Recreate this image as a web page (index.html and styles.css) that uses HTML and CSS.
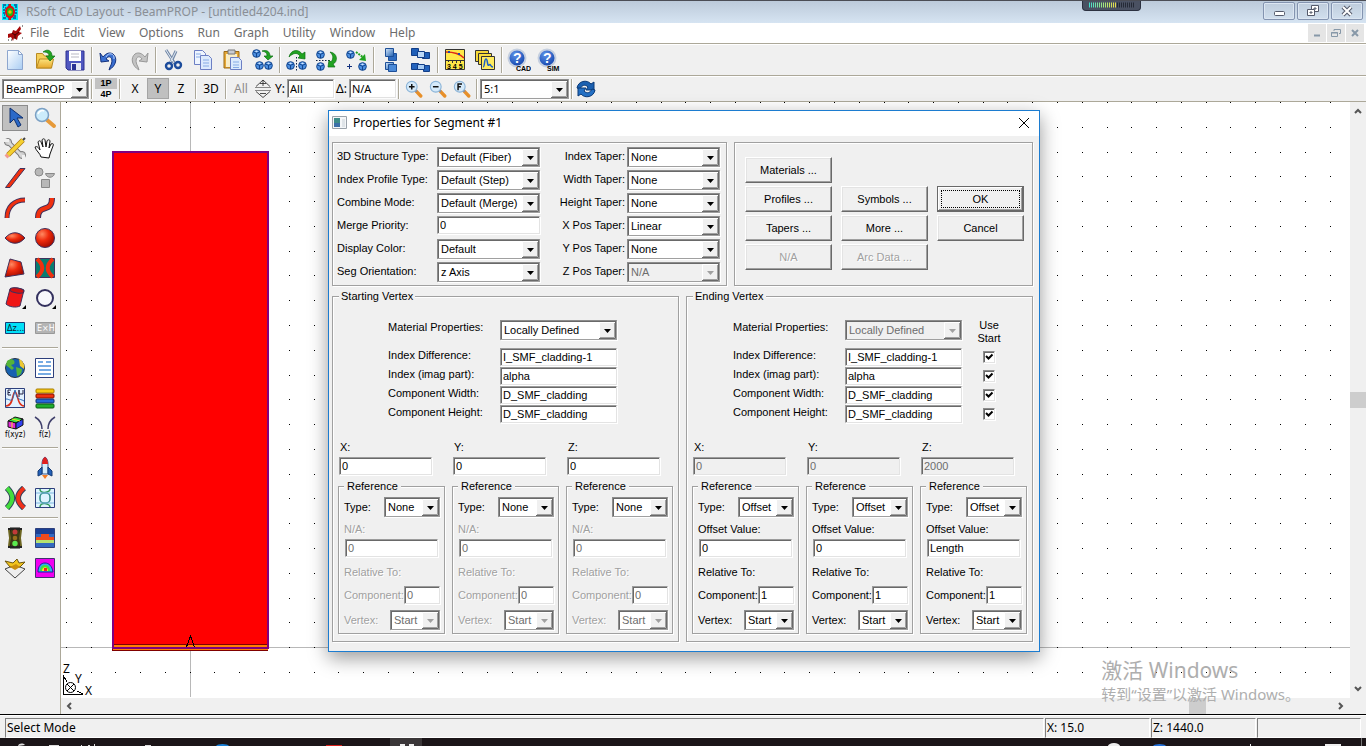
FILE: index.html
```html
<!DOCTYPE html>
<html lang="en">
<head>
<meta charset="utf-8">
<title>RSoft CAD Layout - BeamPROP</title>
<link rel="stylesheet" href="styles.css">
</head>
<body>
<svg class="defs" width="0" height="0" aria-hidden="true">
  <defs>
    <linearGradient id="gPage" x1="0" y1="0" x2="1" y2="1"><stop offset="0" stop-color="#fff"/><stop offset="1" stop-color="#a9cdf3"/></linearGradient>
    <linearGradient id="gFold" x1="0" y1="0" x2="0" y2="1"><stop offset="0" stop-color="#fbe27c"/><stop offset="1" stop-color="#e8a92c"/></linearGradient>
    <linearGradient id="gBlue" x1="0" y1="0" x2="1" y2="1"><stop offset="0" stop-color="#d7e9fb"/><stop offset="1" stop-color="#1f5fb0"/></linearGradient>
    <radialGradient id="gBall" cx=".35" cy=".3" r=".7"><stop offset="0" stop-color="#ff8a62"/><stop offset=".5" stop-color="#ee2a0c"/><stop offset="1" stop-color="#a80d00"/></radialGradient>
    <radialGradient id="gHelp" cx=".4" cy=".3" r=".8"><stop offset="0" stop-color="#5d93e8"/><stop offset="1" stop-color="#0a3aa5"/></radialGradient>
    <linearGradient id="gMeter" gradientUnits="userSpaceOnUse" x1="0" y1="0" x2="28" y2="0"><stop offset="0" stop-color="#3fe0d0"/><stop offset=".5" stop-color="#a0e880"/><stop offset="1" stop-color="#f4dc40"/></linearGradient>
    <symbol id="cube" viewBox="0 0 10 10"><circle cx="5" cy="5" r="4.3" fill="#4c8fe0" stroke="#0b3c84"/><path d="M1.4 3.2 5 4.8l3.6-1.600M5 4.800V9" fill="none" stroke="#0b3c84"/><path d="M3 2.600 5 1.700l2 .9-2 .9z" fill="#cfe5ff"/></symbol>
    <symbol id="lens" viewBox="0 0 16 16"><path d="m9.500 9.500 4.500 4.700" stroke="#e8902a" stroke-width="3" stroke-linecap="round"/><path d="m9 9 1.500 1.500" stroke="#8d8d99" stroke-width="2"/><circle cx="6" cy="6" r="4.800" fill="#d5eafa" stroke="#8bb4d8"/></symbol>
  </defs>
</svg>

<header class="titlebar">
  <svg class="app-icon" viewBox="0 0 16 16"><path fill="#00f0f8" d="M0 0h16v16H0z"/><path d="M1 1h3M6 1h1M12 1h3M1 3h1M3 4h1M13 3h2M1 6h2M13 6h2M1 9h2M13 9h2M2 11h1M12 12h2M1 14h3M6 15h1M11 14h3M4 12h1" stroke="#124a94" stroke-width="1.500"/><ellipse cx="8" cy="8" rx="5" ry="6.500" fill="#e01010"/><path d="M8 0v16" stroke="#e01010" stroke-width="2"/><ellipse cx="8" cy="8" rx="3" ry="4" fill="#15c515"/><circle cx="8" cy="8" r="1.700" fill="#f0c000"/></svg>
  <h1 class="title">RSoft CAD Layout - BeamPROP - [untitled4204.ind]</h1>
  <div class="meter" aria-hidden="true"><svg width="46" height="6"><path d="M28 3h18" stroke="#252a36" stroke-width="5" stroke-dasharray="1 1"/><path d="M0 3h28v.01" fill="none" stroke="url(#gMeter)" stroke-width="5" stroke-dasharray="1 1"/></svg></div>
  <div class="win-buttons">
    <button aria-label="Minimize"><svg width="14" height="12"><rect x="2.500" y="6.500" width="10" height="4" rx="1" fill="#fff" stroke="#555a6b"/></svg></button>
    <button aria-label="Restore"><svg width="14" height="12"><path d="M5.500.500h7v6h-7z" fill="#fff" stroke="#555a6b"/><path d="M1.500 4.500h7v6h-7z" fill="#fff" stroke="#555a6b"/><path d="M4 7h2v1H4zM8 3h2v1H8z" fill="#fff" stroke="#555a6b"/></svg></button>
    <button aria-label="Close"><svg width="14" height="12"><path d="m3 2 8 8m0-8-8 8" stroke="#555a6b" stroke-width="4"/><path d="m3 2 8 8m0-8-8 8" stroke="#fff" stroke-width="2"/></svg></button>
  </div>
</header>

<nav class="menubar">
  <svg class="doc-icon" viewBox="0 0 16 16"><path d="M1 9 5 8l1-3 3 1 4-5 1 3-2 3 3 1-4 3-1 4-3-2-1 3-2-4-3 1z" fill="#a80808"/><path d="m5 8 3 2 4-3M8 10v4" stroke="#400" fill="none"/><path d="M1 15h1M4 15h1M15 1h1M15 13h1" stroke="#222"/></svg>
  <button>File</button><button>Edit</button><button>View</button><button>Options</button><button>Run</button><button>Graph</button><button>Utility</button><button>Window</button><button>Help</button>
  <div class="mdi-buttons">
    <button aria-label="Minimize document"><svg width="10" height="10"><path d="M2 7.500h6" stroke="#8798a8" stroke-width="2"/></svg></button>
    <button aria-label="Restore document"><svg width="10" height="10" fill="none" stroke="#8798a8"><path d="M3 3V1.500h6.500v4H8M.500 4.500h6v4h-6zM0 5h7"/></svg></button>
    <button aria-label="Close document"><svg width="10" height="10"><path d="m2 2 6 6m0-6L2 8" stroke="#8798a8" stroke-width="2"/></svg></button>
  </div>
</nav>

<div class="toolbar tools">
  <button aria-label="New"><svg viewBox="0 0 24 24"><path d="M4.500 2.500h11l4 4v15h-15z" fill="url(#gPage)" stroke="#8da6cf"/><path d="M15.500 2.500v4h4z" fill="#fff" stroke="#8da6cf"/></svg></button>
  <button aria-label="Open"><svg viewBox="0 0 24 24"><path d="M3.500 20V5.500h6l2 2.500h7v12z" fill="#f5cf5a" stroke="#b98a22"/><path d="m3.500 20 3-9h14l-2 9z" fill="url(#gFold)" stroke="#b98a22"/><path d="M10 4c5-4 9-1 9 4h3l-5 5-4-5h3c0-3-2-4-6-4z" fill="#22a322" stroke="#0b6e12" stroke-width=".7"/></svg></button>
  <button aria-label="Save"><svg viewBox="0 0 24 24"><path d="M3 3h18v19H5l-2-2z" fill="#4f57c0" stroke="#2e3190"/><path d="M6 3h12v10H6z" fill="#fff"/><path d="M8 6h8M8 9h8" stroke="#b9b9c4"/><path d="M8 15h10v7H8z" fill="#e6e8f4"/><path d="M9 16h4v6H9z" fill="#2a3194"/></svg></button>
  <span class="sep"></span>
  <button aria-label="Undo"><svg viewBox="0 0 24 24"><path d="m3 5 1 9 8-1-3-2c3-5 9-1 4 8l-1 3c7-4 9-12 4-16-3-2-7-1-10 3z" fill="#3a6fd0" stroke="#14327e"/><path d="M9 9c2-5 9-4 8 2" fill="none" stroke="#bcd6ff"/></svg></button>
  <button aria-label="Redo"><svg viewBox="0 0 24 24"><path d="m21 5-1 9-8-1 3-2c-3-5-9-1-4 8l1 3C5 18 3 10 8 6c3-2 7-1 10 3z" fill="#c4c4c4" stroke="#999"/></svg></button>
  <span class="sep"></span>
  <button aria-label="Cut"><svg viewBox="0 0 24 24"><path d="m5 2 9 14M15 3 9 16" stroke="#7389a8" stroke-width="3"/><path d="m5 2 8 13M15 3 9 15" stroke="#e4ecf5"/><circle cx="8" cy="18" r="3" fill="none" stroke="#1c4c9c" stroke-width="2.400"/><circle cx="17" cy="17" r="3" fill="none" stroke="#1c4c9c" stroke-width="2.400"/></svg></button>
  <button aria-label="Copy"><svg viewBox="0 0 24 24" stroke="#6c7fc4"><path d="M3.500 2.500h8l3 3v11h-11z" fill="#eef5ff"/><path d="M9.500 7.500h8l3 3v11h-11z" fill="#dceafd"/><path d="M5 6h5M5 9h4M12 12h6M12 15h6M12 18h6" stroke="#86abe5"/></svg></button>
  <button aria-label="Paste"><svg viewBox="0 0 24 24"><path d="M3 3.500h15V20H3z" fill="#e6a836" stroke="#9a6a18"/><path d="M5 6h11v13H5z" fill="#f8edc8"/><path d="M7 2h7v4H7z" fill="#c9ccd4" stroke="#777"/><path d="M9.500 9.500h8l3 3v9h-11z" fill="#dceafd" stroke="#6c7fc4"/><path d="M12 14h6M12 17h6M12 19.500h6" stroke="#86abe5"/></svg></button>
  <button aria-label="Duplicate"><svg viewBox="0 0 24 24"><use href="#cube" x="1" y="1" width="9" height="9"/><use href="#cube" x="4" y="13" width="9" height="9"/><use href="#cube" x="13" y="13" width="9" height="9"/><path d="M11 3c6-2 8 2 8 5h3l-5 4-4-4h3c0-3-1-4-5-5z" fill="#21a321" stroke="#0b6e12" stroke-width=".7"/></svg></button>
  <span class="sep"></span>
  <button aria-label="Flip horizontally"><svg viewBox="0 0 24 24"><use href="#cube" x="1" y="13" width="9" height="9"/><use href="#cube" x="13" y="13" width="9" height="9"/><path d="M11.500 9v14" stroke="#124" stroke-dasharray="1.500 1.500"/><path d="M4 9c2-8 10-8 13-3l3-2v7l-7-1 2-2c-3-4-7-3-11 1z" fill="#21a321" stroke="#0b6e12" stroke-width=".7"/></svg></button>
  <button aria-label="Flip vertically"><svg viewBox="0 0 24 24"><use href="#cube" x="1" y="2" width="9" height="9"/><use href="#cube" x="1" y="14" width="9" height="9"/><path d="M1 12.500h14" stroke="#124" stroke-dasharray="1.500 1.500"/><path d="M15 4c8 1 8 10 3 12l2 3h-7l1-7 2 2c3-4 2-7-1-10z" fill="#21a321" stroke="#0b6e12" stroke-width=".7"/></svg></button>
  <button aria-label="Move copy"><svg viewBox="0 0 24 24"><use href="#cube" x="1" y="2" width="9" height="9"/><use href="#cube" x="13" y="14" width="9" height="9"/><path d="m11 4 8 6" stroke="#21a321" stroke-width="2" stroke-dasharray="2 1"/><path d="m20 6 1 7-7-1z" fill="#21a321"/><path d="M2 18.500h5M4.500 16v5" stroke="#12307e"/></svg></button>
  <span class="sep"></span>
  <button aria-label="Bring forward"><svg viewBox="0 0 24 24" stroke="#1d4f98"><path d="M9.500 5.500h8v7h-8z" fill="#2f6cc0"/><path d="M6.500.500h8v8h-8z" fill="url(#gBlue)"/><path d="M6.500 14.500h8v7h-8z" fill="url(#gBlue)"/><path d="M9.500 16.500h8v7h-8z" fill="#4b8ad8"/></svg></button>
  <button aria-label="Arrange"><svg viewBox="0 0 24 24" stroke="#123e88"><path d="M2.500.500h7v7h-7zM13.500 4.500h7v6h-7z" fill="#1f5fb8"/><path d="M8.500 3.500h7v6h-7z" fill="#bcd9f8"/><path d="M2.500 15.500h7v6h-7zM14.500 17.500h6v6h-6z" fill="#2463bc"/><path d="M8.500 16.500h7v5h-7z" fill="#a9cdf4"/></svg></button>
  <span class="sep"></span>
  <button aria-label="Measure"><svg viewBox="0 0 24 24"><path d="M2.500 1.500h19v20h-19z" fill="#ffe848" stroke="#333"/><path d="M2 12.500h20M5.500 12v2M9.500 12v3M13.500 12v3M17.500 12v3" stroke="#333"/><path d="M3 4c7 0 13 1 18 6" stroke="#e02818" stroke-width="1.500" fill="none"/><path d="M5 3h2v2H5zM15 5h2v2h-2z" fill="#24a"/><text x="4" y="21" class="micro">3 4 5</text></svg></button>
  <button aria-label="Graphs"><svg viewBox="0 0 24 24" stroke="#333"><path d="M2.500 2.500h13v11h-13z" fill="#f5d838"/><path d="M5.500 5.500h13v11h-13z" fill="#f8de40"/><path d="M8.500 8.500h13v13h-13z" fill="#ffec60"/><path d="M10 19c2 0 1-8 3-8s1 8 3 6 1 2 4 2" fill="none" stroke="#1b62c8" stroke-width="1.500"/></svg></button>
  <span class="sep"></span>
  <button aria-label="CAD help"><svg viewBox="0 0 24 24"><circle cx="10" cy="10" r="8.500" fill="url(#gHelp)" stroke="#c5cfdf" stroke-width="2"/><text x="6" y="15" class="help-mark">?</text><text x="9" y="23" class="tiny">CAD</text></svg></button>
  <button aria-label="Simulation help"><svg viewBox="0 0 24 24"><circle cx="10" cy="10" r="8.500" fill="url(#gHelp)" stroke="#c5cfdf" stroke-width="2"/><text x="6" y="15" class="help-mark">?</text><text x="10" y="23" class="tiny">SIM</text></svg></button>
</div>

<div class="toolbar options">
  <select class="combo program" aria-label="Program"><option>BeamPROP</option></select>
  <span class="sep"></span>
  <div class="pages"><button class="on">1P</button><button>4P</button></div>
  <span class="sep"></span>
  <button class="flat">X</button><button class="flat on">Y</button><button class="flat">Z</button>
  <span class="sep"></span>
  <button class="flat">3D</button>
  <span class="sep"></span>
  <button class="flat dim">All</button>
  <button class="spin" aria-label="Step"><svg width="18" height="20" fill="none" stroke="#222"><path d="M9 1v6M6 4.500h6M2 7.500 9 1l7 6.500M2 12.500l7 6 7-6M6 14.500h6" stroke-width=".8"/><path d="M1 8.500h16M1 11.500h16" stroke="#888"/></svg></button>
  <label class="tb-label" for="ycut">Y:</label><input class="field tb-field" id="ycut" value="All">
  <label class="tb-label" for="delta">Δ:</label><input class="field tb-field" id="delta" value="N/A">
  <span class="sep"></span>
  <button class="zoom" aria-label="Zoom in"><svg viewBox="0 0 16 16"><use href="#lens"/><path d="M3.500 6h5M6 3.500v5" stroke="#111" stroke-width="1.300"/></svg></button>
  <button class="zoom" aria-label="Zoom out"><svg viewBox="0 0 16 16"><use href="#lens"/><path d="M3.500 6h5" stroke="#111" stroke-width="1.300"/></svg></button>
  <button class="zoom" aria-label="Zoom full"><svg viewBox="0 0 16 16"><use href="#lens"/><path d="M4.500 9V3.500H8M4.500 6H7" stroke="#111" fill="none" stroke-width="1.300"/></svg></button>
  <span class="sep"></span>
  <select class="combo ratio" aria-label="Aspect ratio"><option>5:1</option></select>
  <span class="sep"></span>
  <button class="refresh" aria-label="Refresh"><svg viewBox="0 0 22 20"><path d="M2 9c1-7 10-9 14-4l3-2v8h-8l2-3c-3-3-6-2-8 2z" fill="#1b60b0" stroke="#0b3a78"/><path d="M20 11c-1 7-10 9-14 4l-3 2V9h8l-2 3c3 3 6 2 8-2z" fill="#2470c4" stroke="#0b3a78"/></svg></button>
</div>

<main class="workspace">
  <aside class="palette">
    <div class="tool-grid">
      <button class="on" aria-label="Select"><svg viewBox="0 0 24 24"><path d="M7 2v15l4-4 4 8 3-2-4-7h6z" fill="#2b69c8" stroke="#10306e"/></svg></button>
      <button aria-label="Zoom"><svg viewBox="0 0 24 24"><path d="m14 14 7 6" stroke="#e69a3a" stroke-width="4" stroke-linecap="round"/><circle cx="9" cy="9" r="6.500" fill="#ccecfb" stroke="#7ba0c4" stroke-width="1.500"/><path d="M5 8c1-3 4-4 6-3" stroke="#fff" stroke-width="1.500" fill="none"/></svg></button>
      <button aria-label="Edit tools"><svg viewBox="0 0 24 24"><path d="m5 6 14 14" stroke="#777" stroke-width="5"/><circle cx="5" cy="6" r="3.500" fill="#ccc" stroke="#777"/><circle cx="19" cy="19" r="3.500" fill="#ccc" stroke="#777"/><path d="m5 6 14 14" stroke="#d8d8d8" stroke-width="3"/><path d="M1 3h5v3H1zM19 19h3v4h-3z" fill="#f0f0f0"/><path d="M5 19 20 4" stroke="#b07a10" stroke-width="5"/><path d="M5 19 20 4" stroke="#f4d030" stroke-width="3.500"/><path d="m3 21 2-2" stroke="#f29a90" stroke-width="4"/><path d="m20 4 2-2" stroke="#444" stroke-width="2"/></svg></button>
      <button aria-label="Pan"><svg viewBox="0 0 24 24"><path d="M8 21c-1-4-5-6-6-10 2-1 3 0 5 3L5 6c1-2 3-1 3 0l2 5-1-7c1-2 3-1 3 0l1 7 1-6c1-2 3-1 3 0l-1 7 2-4c2-1 3 0 2 2l-3 8-1 4z" fill="#fff" stroke="#111"/></svg></button>
      <button aria-label="Straight"><svg viewBox="0 0 24 24"><path d="M2.500 21.500 17 2.500h5L7 21.500z" fill="#f0300f" stroke="#40305c"/></svg></button>
      <button aria-label="Shapes"><svg viewBox="0 0 24 24" fill="#b8b8b8" stroke="#888"><circle cx="6" cy="6" r="4"/><path d="M12.500 7.500h9c-1 5-8 5-9 0zM8.500 13.500h8v8h-8z"/></svg></button>
      <button aria-label="Arc"><svg viewBox="0 0 24 24" fill="none"><path d="M4 22C4 11 11 4 22 4" stroke="#40305c" stroke-width="5"/><path d="M4 22C4 11 11 4 22 4" stroke="#f0300f" stroke-width="3"/></svg></button>
      <button aria-label="S-bend"><svg viewBox="0 0 24 24" fill="none"><path d="M5 22c0-15 14-4 14-20" stroke="#40305c" stroke-width="6"/><path d="M5 22c0-15 14-4 14-20" stroke="#f0300f" stroke-width="4"/></svg></button>
      <button aria-label="Lens"><svg viewBox="0 0 24 24"><path d="M2 12c6-7 14-7 20 0-6 7-14 7-20 0z" fill="url(#gBall)" stroke="#40305c"/></svg></button>
      <button aria-label="Sphere"><svg viewBox="0 0 24 24"><circle cx="12" cy="12" r="9.500" fill="url(#gBall)" stroke="#40305c"/></svg></button>
      <button aria-label="Polygon"><svg viewBox="0 0 24 24"><path d="m7 3 11 3 3 12-19 3z" fill="url(#gBall)" stroke="#40305c"/></svg></button>
      <button aria-label="Coupler"><svg viewBox="0 0 24 24"><path d="M2.500 2.500h19v19h-19z" fill="#087c70" stroke="#40305c"/><path d="M4 3c7 6 7 12 0 18M20 3c-7 6-7 12 0 18" fill="none" stroke="#f0300f" stroke-width="4"/></svg></button>
      <button class="more" aria-label="Cylinder"><svg viewBox="0 0 24 24"><path d="M7 3c4-2 10-1 14 1l-4 16c-4 2-11 1-14-2z" fill="#ef1616" stroke="#40305c"/><ellipse cx="14" cy="4.500" rx="7" ry="2.500" transform="rotate(8 14 4.500)" fill="#d01010" stroke="#40305c"/></svg></button>
      <button class="more" aria-label="Ring"><svg viewBox="0 0 24 24"><circle cx="12" cy="12" r="8" fill="#f7f7fc" stroke="#33305e" stroke-width="2"/></svg></button>
      <button aria-label="Delta z"><svg viewBox="0 0 24 24"><path d="M2.500 6.500h19v11h-19z" fill="#00e0f8" stroke="#153a74"/><text x="4" y="15" class="badge-text">Δz...</text></svg></button>
      <button aria-label="E cross H"><svg viewBox="0 0 24 24"><path d="M2.500 6.500h19v11h-19z" fill="#b4b4b4" stroke="#999"/><text x="4" y="15" class="badge-text light">E×H</text></svg></button>
    </div>
    <div class="tool-grid">
      <button aria-label="Global settings"><svg viewBox="0 0 24 24"><circle cx="12" cy="12" r="9.500" fill="#1861b0" stroke="#234"/><path d="M4 5c5-4 9 0 7 3L8 9l3 3-2 2-6-5zM13 11l6 2c0 5-3 7-5 7z" fill="#55b438"/><path d="M16 3c4 2 6 6 5 10l-4-3z" fill="#edc832"/></svg></button>
      <button aria-label="Symbol table"><svg viewBox="0 0 24 24"><path d="M2.500 2.500h18v19h-18z" fill="#fff" stroke="#2d3f7c"/><path d="M5 6h5M13 6h5M5 10h13M6 14h12M5 18h13" stroke="#4990da" stroke-width="1.700"/></svg></button>
      <button aria-label="Materials"><svg viewBox="0 0 24 24"><path d="M2.500 2.500h19v19h-19z" fill="#e2f1ff" stroke="#2d3f7c"/><path d="M3 20c8 0 6-14 9-14s2 14 9 14" fill="none" stroke="#e03018" stroke-width="1.500"/><path d="M3 13c5 0 6 6 9-9 2 11 4 8 9 11" fill="none" stroke="#2468b8"/><path d="M8 4H5v5h3M5 6.500h2M16 4v7M16 4v4h4V4" fill="none" stroke="#224"/></svg></button>
      <button aria-label="Layers"><svg viewBox="0 0 24 24"><rect x="3" y="3" width="18" height="4" rx="1" fill="#f8c810" stroke="#a77c00"/><rect x="3" y="8" width="18" height="4" rx="1" fill="#ef3010" stroke="#801000"/><rect x="3" y="13" width="18" height="4" rx="1" fill="#2467d8" stroke="#10306e"/><rect x="3" y="18" width="18" height="4" rx="1" fill="#1fae2d" stroke="#0b5c14"/></svg></button>
      <button aria-label="Function of XYZ"><svg viewBox="0 0 24 24"><path d="m5 5 7-4 8 2-7 4z" fill="#39e040" stroke="#111"/><path d="m5 5 8 2v6l-8-2z" fill="#e028d8" stroke="#111"/><path d="m13 7 7-4v6l-7 4z" fill="#3040f0" stroke="#111"/><path d="m9 3 8 2M9 6v6" stroke="#f0e020"/><text x="2" y="21" class="fn-text">f(xyz)</text></svg></button>
      <button aria-label="Function of z"><svg viewBox="0 0 24 24"><path d="M2 1c5 3 7 6 7 12M22 1c-5 3-7 6-7 12" fill="none" stroke="#40406c" stroke-width="1.500"/><text x="6" y="21" class="fn-text">f(z)</text></svg></button>
    </div>
    <div class="tool-grid">
      <button class="right" aria-label="Launch"><svg viewBox="0 0 24 24"><path d="M9 8c0-3 1-6 3-7 2 1 3 4 3 7v10H9z" fill="#d5ecfb" stroke="#345a94"/><path d="M9 8c0-3 1-6 3-7 2 1 3 4 3 7z" fill="#e02020"/><path d="m9 11-4 4v5l4-2zM15 11l4 4v5l-4-2z" fill="#2360b8" stroke="#143a74"/><path d="M9 19h6l-3 4z" fill="#f47a20"/></svg></button>
      <button aria-label="Pathways"><svg viewBox="0 0 24 24" fill="none"><path d="M4 2c7 7 7 13 0 20M21 2c-8 7-8 13 0 20" stroke="#30405c" stroke-width="6"/><path d="M4 2c7 7 7 13 0 20" stroke="#43dc3d" stroke-width="4"/><path d="M21 2c-8 7-8 13 0 20" stroke="#f0301a" stroke-width="4"/></svg></button>
      <button aria-label="Monitors"><svg viewBox="0 0 24 24"><path d="M2.500 2.500h19v19h-19z" fill="#dff3ff" stroke="#2d3f7c"/><path d="M7 3c0 6 10 3 10 0M7 21c0-6 10-3 10 0" fill="none" stroke="#2f9a58" stroke-width="1.500"/><rect x="7" y="7" width="10" height="10" rx="4" fill="none" stroke="#2f8a88" stroke-width="1.500"/><path d="M3 7h18M3 17h18" stroke="#7fb8e0"/></svg></button>
    </div>
    <div class="tool-grid">
      <button aria-label="Perform simulation"><svg viewBox="0 0 24 24"><path d="M7 2h10v20H7z" fill="#3c3a14" stroke="#111"/><path d="M5 3h14M5 21h14" stroke="#222" stroke-width="2"/><path d="m6 4 1 8-1 8M18 4l-1 8 1 8" fill="none" stroke="#6b6420" stroke-width="2"/><circle cx="12" cy="6" r="2.500" fill="#c03a3a"/><circle cx="12" cy="12" r="2.300" fill="#98701c"/><circle cx="12" cy="17.500" r="2.700" fill="#5aea50"/></svg></button>
      <button aria-label="Compute modes"><svg viewBox="0 0 24 24"><path d="M2.500 2.500h19v19h-19z" fill="#3268c0" stroke="#2d3f7c"/><path d="M3 3h18v5H3z" fill="#1a3f94"/><path d="M3 14v-3h5V8h8v3h5v3z" fill="#f04a1c"/><path d="M3 14h18v3H3z" fill="#b6e270"/></svg></button>
      <button aria-label="Scan"><svg viewBox="0 0 24 24"><path d="m2 13 10-4 10 4-10 9z" fill="#eee" stroke="#444"/><path d="m2 5 8 2 4-4 2 4 6-1-5 5H7z" fill="#f2c41c" stroke="#6b5510"/><path d="m7 11 6-3 4 3-5 3z" fill="#c98e10"/></svg></button>
      <button aria-label="Contour"><svg viewBox="0 0 24 24"><path d="M2.500 2.500h19v19h-19z" fill="#f000f0" stroke="#403070"/><path d="M5 16c0-6 3-9 7-9s7 3 8 9z" fill="#30b0f0" stroke="#20209c"/><path d="M7 15c0-4 2-6 5-6s5 2 5 6z" fill="#40e040"/><path d="M9 15c0-5 6-5 6 0z" fill="#f6ee20"/><path d="M11 12h3v3h-3z" fill="#f02020"/></svg></button>
    </div>
  </aside>

  <section class="view">
    <div class="canvas">
      <svg class="drawing" id="drawing" aria-label="Layout canvas">
        <g transform="translate(-61 -102)" shape-rendering="crispEdges">
          <path d="M190.500 0v697M0 647.500h3000" stroke="#b8b8b8"/>
          <path id="grid-dots" fill="#000"/>
          <rect x="113" y="152" width="155" height="499" fill="#f00"/>
          <path d="M113 645h155v5H113z" fill="#ff8000"/>
          <path d="M112 644.500h156M112 650.500h156M112.500 644v7" stroke="#800000" fill="none"/>
          <path d="M113 649V152h155v497M112 648h157" fill="none" stroke="#800080" stroke-width="2"/>
          <path d="M186.500 647 190.500 636l4 11" fill="none" stroke="#000"/>
          <path d="M62 665h24v31H62z" fill="#fff"/>
          <path d="M63.500 675v19.500H83M63 675l4 7M83 694l-6-3" fill="none" stroke="#000"/>
        </g>
        <g transform="translate(-61 -102)"><circle cx="70.500" cy="687.500" r="5" fill="#fff" stroke="#000"/><path d="m67 684 7 7m0-7-7 7" stroke="#000"/>
          <text x="63" y="673" class="axis">Z</text><text x="75" y="683" class="axis">Y</text><text x="85" y="695" class="axis">X</text></g>
      </svg>
    </div>
    <div class="scroll vertical"><svg width="8" height="6"><path d="m1 5 3-3 3 3" /></svg><i></i><svg width="8" height="6"><path d="m1 1 3 3 3-3"/></svg></div>
    <div class="scroll horizontal"><svg width="6" height="8"><path d="M5 1 2 4l3 3"/></svg><i></i><svg width="6" height="8"><path d="m1 1 3 3-3 3"/></svg></div>
    <div class="watermark"><p>激活 Windows</p><p>转到“设置”以激活 Windows。</p></div>
  </section>
</main>

<footer class="status"><span>Select Mode</span><span>X: 15.0</span><span>Z: 1440.0</span><span></span></footer>
<div class="taskbar" aria-hidden="true"><svg width="100%" height="8"><path d="M18 8c1-3 5-3 7-1zM81 7h1v1h-1zM88 7h2v1h-2zM94 6h1v2h-1zM145 7h6v1h-6zM49 7h10v1H49z" fill="#ddd"/><path d="M216 8a7 3 0 0 1 13 0z" fill="#1780d8"/><path d="M326 7h16v1h-16z" fill="#d8201a"/><path d="M390 0h32v8h-32z" fill="#3a3638"/><path d="M400 6h5v2h-5zM409 6h5v2h-5zM1108 8a6 3 0 0 1 12 0zM1325 6h16v2h-16zM1250 6h1v2h-1z" fill="#eee"/><path d="M1153 8a7 3 0 0 1 13 0z" fill="#2370d8"/><path d="M1361 0h1v8h-1z" fill="#777"/></svg></div>

<form class="dialog" role="dialog" aria-labelledby="dlg-title" onsubmit="return false">
  <div class="dlg-title">
    <svg width="16" height="14"><path d="M.500.500h14v12H.500z" fill="#f4f6f8" stroke="#9aa2aa"/><path d="M2 2h6v9H2z" fill="#3d8c88"/><path d="M2 7h6v4H2z" fill="#3b6fa8"/><path d="M10 3h3v8h-3z" fill="#dfe4e8"/></svg>
    <h2 id="dlg-title">Properties for Segment #1</h2>
    <button class="close" aria-label="Close"><svg width="12" height="12"><path d="m1 1 10 10m0-10L1 11" stroke="#000"/></svg></button>
  </div>
  <div class="dlg-body">
    <div class="top-row">
      <div class="panel settings">
        <div class="settings-left">
          <label for="s1">3D Structure Type:</label><select class="combo" id="s1"><option>Default (Fiber)</option></select>
          <label for="s2">Index Profile Type:</label><select class="combo" id="s2"><option>Default (Step)</option></select>
          <label for="s3">Combine Mode:</label><select class="combo" id="s3"><option>Default (Merge)</option></select>
          <label for="s4">Merge Priority:</label><input class="field" id="s4" value="0">
          <label for="s5">Display Color:</label><select class="combo" id="s5"><option>Default</option></select>
          <label for="s6">Seg Orientation:</label><select class="combo" id="s6"><option>z Axis</option></select>
        </div>
        <div class="settings-right">
          <label for="t1">Index Taper:</label><select class="combo" id="t1"><option>None</option></select>
          <label for="t2">Width Taper:</label><select class="combo" id="t2"><option>None</option></select>
          <label for="t3">Height Taper:</label><select class="combo" id="t3"><option>None</option></select>
          <label for="t4">X Pos Taper:</label><select class="combo" id="t4"><option>Linear</option></select>
          <label for="t5">Y Pos Taper:</label><select class="combo" id="t5"><option>None</option></select>
          <label for="t6">Z Pos Taper:</label><select class="combo grey" id="t6" disabled><option>N/A</option></select>
        </div>
      </div>
      <div class="panel actions">
        <button class="btn first">Materials ...</button>
        <button class="btn">Profiles ...</button><button class="btn">Symbols ...</button><button class="btn default">OK</button>
        <button class="btn">Tapers ...</button><button class="btn">More ...</button><button class="btn">Cancel</button>
        <button class="btn" disabled>N/A</button><button class="btn" disabled>Arc Data ...</button>
      </div>
    </div>

    <div class="vertex-row">
      <fieldset class="vertex">
        <legend>Starting Vertex</legend>
        <div class="props">
          <label for="a1">Material Properties:</label><select class="combo" id="a1"><option>Locally Defined</option></select>
          <label for="a2">Index Difference:</label><input class="field" id="a2" value="I_SMF_cladding-1">
          <label for="a3">Index (imag part):</label><input class="field" id="a3" value="alpha">
          <label for="a4">Component Width:</label><input class="field" id="a4" value="D_SMF_cladding">
          <label for="a5">Component Height:</label><input class="field" id="a5" value="D_SMF_cladding">
        </div>
        <div class="axes">
          <div class="axis-col">
            <label for="ax">X:</label><input class="field" id="ax" value="0">
            <fieldset class="ref"><legend>Reference</legend>
              <div class="line"><label for="ax1">Type:</label><select class="combo type" id="ax1"><option>None</option></select></div>
              <label class="off" for="ax2">N/A:</label><input class="field value" id="ax2" value="0" disabled>
              <p class="off rel">Relative To:</p>
              <div class="line"><label class="off" for="ax3">Component:</label><input class="field comp" id="ax3" value="0" disabled></div>
              <div class="line"><label class="off" for="ax4">Vertex:</label><select class="combo vert" id="ax4" disabled><option>Start</option></select></div>
            </fieldset>
          </div>
          <div class="axis-col">
            <label for="ay">Y:</label><input class="field" id="ay" value="0">
            <fieldset class="ref"><legend>Reference</legend>
              <div class="line"><label for="ay1">Type:</label><select class="combo type" id="ay1"><option>None</option></select></div>
              <label class="off" for="ay2">N/A:</label><input class="field value" id="ay2" value="0" disabled>
              <p class="off rel">Relative To:</p>
              <div class="line"><label class="off" for="ay3">Component:</label><input class="field comp" id="ay3" value="0" disabled></div>
              <div class="line"><label class="off" for="ay4">Vertex:</label><select class="combo vert" id="ay4" disabled><option>Start</option></select></div>
            </fieldset>
          </div>
          <div class="axis-col">
            <label for="az">Z:</label><input class="field" id="az" value="0">
            <fieldset class="ref"><legend>Reference</legend>
              <div class="line"><label for="az1">Type:</label><select class="combo type" id="az1"><option>None</option></select></div>
              <label class="off" for="az2">N/A:</label><input class="field value" id="az2" value="0" disabled>
              <p class="off rel">Relative To:</p>
              <div class="line"><label class="off" for="az3">Component:</label><input class="field comp" id="az3" value="0" disabled></div>
              <div class="line"><label class="off" for="az4">Vertex:</label><select class="combo vert" id="az4" disabled><option>Start</option></select></div>
            </fieldset>
          </div>
        </div>
      </fieldset>

      <fieldset class="vertex">
        <legend>Ending Vertex</legend>
        <div class="props with-use">
          <label for="b1">Material Properties:</label><select class="combo grey" id="b1" disabled><option>Locally Defined</option></select><span class="use">Use Start</span>
          <label for="b2">Index Difference:</label><input class="field" id="b2" value="I_SMF_cladding-1"><input type="checkbox" checked aria-label="Use start index difference">
          <label for="b3">Index (imag part):</label><input class="field" id="b3" value="alpha"><input type="checkbox" checked aria-label="Use start index imaginary part">
          <label for="b4">Component Width:</label><input class="field" id="b4" value="D_SMF_cladding"><input type="checkbox" checked aria-label="Use start width">
          <label for="b5">Component Height:</label><input class="field" id="b5" value="D_SMF_cladding"><input type="checkbox" checked aria-label="Use start height">
        </div>
        <div class="axes">
          <div class="axis-col">
            <label for="bx">X:</label><input class="field grey" id="bx" value="0" disabled>
            <fieldset class="ref"><legend>Reference</legend>
              <div class="line"><label for="bx1">Type:</label><select class="combo type" id="bx1"><option>Offset</option></select></div>
              <label for="bx2">Offset Value:</label><input class="field value" id="bx2" value="0">
              <p class="rel">Relative To:</p>
              <div class="line"><label for="bx3">Component:</label><input class="field comp" id="bx3" value="1"></div>
              <div class="line"><label for="bx4">Vertex:</label><select class="combo vert" id="bx4"><option>Start</option></select></div>
            </fieldset>
          </div>
          <div class="axis-col">
            <label for="by">Y:</label><input class="field grey" id="by" value="0" disabled>
            <fieldset class="ref"><legend>Reference</legend>
              <div class="line"><label for="by1">Type:</label><select class="combo type" id="by1"><option>Offset</option></select></div>
              <label for="by2">Offset Value:</label><input class="field value" id="by2" value="0">
              <p class="rel">Relative To:</p>
              <div class="line"><label for="by3">Component:</label><input class="field comp" id="by3" value="1"></div>
              <div class="line"><label for="by4">Vertex:</label><select class="combo vert" id="by4"><option>Start</option></select></div>
            </fieldset>
          </div>
          <div class="axis-col">
            <label for="bz">Z:</label><input class="field grey" id="bz" value="2000" disabled>
            <fieldset class="ref"><legend>Reference</legend>
              <div class="line"><label for="bz1">Type:</label><select class="combo type" id="bz1"><option>Offset</option></select></div>
              <label for="bz2">Offset Value:</label><input class="field value" id="bz2" value="Length">
              <p class="rel">Relative To:</p>
              <div class="line"><label for="bz3">Component:</label><input class="field comp" id="bz3" value="1"></div>
              <div class="line"><label for="bz4">Vertex:</label><select class="combo vert" id="bz4"><option>Start</option></select></div>
            </fieldset>
          </div>
        </div>
      </fieldset>
    </div>
  </div>
</form>
<script src="grid.js"></script>
</body>
</html>
```
FILE: styles.css
```css
* { box-sizing: border-box; }

body {
  margin: 0;
  height: 100vh;
  display: flex;
  flex-direction: column;
  position: relative;
  overflow: hidden;
  background: #f0f0f0;
  color: #000;
  font: 12px/16px "Noto Sans", "Noto Sans CJK SC", sans-serif;
}

button, input, select { font: inherit; color: inherit; margin: 0; border-radius: 0; outline: none; }
button { border: 0; padding: 0; background: none; }
h1, h2, p { margin: 0; font-weight: 400; }
svg { display: block; }
.defs { position: absolute; }

/* Title bar and menu */
.titlebar {
  flex: none;
  display: flex;
  align-items: center;
  height: 23px;
  padding: 0 3px 0 2px;
  border-top: 1px solid #4b4d55;
  background: linear-gradient(#bccada, #d6e4f2);
}
.app-icon { width: 16px; height: 16px; margin-right: 8px; }
.title { flex: 1; font-size: 12px; color: #8a8f96; }
.meter {
  align-self: flex-start;
  width: 59px;
  height: 10px;
  margin-right: 122px;
  padding: 1px 6px;
  background: #4a5162;
  border: 1px solid #2c3140;
  border-top: 0;
  border-radius: 0 0 4px 4px;
}
.win-buttons { display: flex; gap: 2px; align-self: flex-start; padding-top: 1px; }
.win-buttons button {
  width: 32px;
  height: 18px;
  display: grid;
  place-items: center;
  border: 1px solid #8494b0;
  border-radius: 2px;
  box-shadow: inset 0 0 0 1px #dce6f2;
}
.menubar {
  flex: none;
  display: flex;
  align-items: center;
  height: 20px;
  padding: 0 2px 0 7px;
  background: #fff;
  color: #6c6c6c;
}
.menubar > button { padding: 0 7px; }
.doc-icon { width: 16px; height: 16px; }
.mdi-buttons { display: flex; gap: 1px; margin-left: auto; }
.mdi-buttons button { width: 18px; height: 18px; display: grid; place-items: center; background: #e5e5e5; }

/* Toolbars */
.toolbar {
  flex: none;
  display: flex;
  align-items: center;
  border-top: 1px solid #aca899;
  box-shadow: inset 0 1px 0 #fff;
}
.toolbar > * { flex: none; }
.tools { height: 32px; }
.tools button { width: 30px; height: 30px; padding: 3px; }
.tools button svg { width: 24px; height: 24px; }
.sep { width: 2px; height: 26px; margin: 0 1px; border-left: 1px solid #aca899; border-right: 1px solid #fff; }
.options { height: 26px; padding: 0 2px; }
.options .sep { height: 20px; margin: 0 2px; }
.toolbar .combo { font-family: "Noto Sans", sans-serif; font-size: 11px; }
.toolbar .program { width: 87px; }
.toolbar .ratio { width: 89px; }
.pages { width: 22px; display: grid; font: 700 9px/11px "Liberation Sans", sans-serif; }
.pages .on { background: #c2c2c2; }
.flat { width: 24px; height: 21px; }
.flat.on { background: #c0c0c0; border: 1px solid #a5a5a5; width: 22px; }
.flat.dim { color: #8c8c8c; }
.spin { padding: 0 1px; }
.tb-label { padding: 0 2px; }
.field.tb-field { width: 47px; height: 19px; font: 11px/15px "Noto Sans", sans-serif; }
.zoom { width: 24px; padding: 3px; }
.zoom svg { width: 18px; height: 18px; }
.refresh { width: 22px; }
.refresh svg { width: 22px; height: 20px; }
.micro { font: 700 7px "Liberation Sans", sans-serif; }
.tiny { font: 700 7px "Liberation Sans", sans-serif; }
.help-mark { font: 700 14px "Liberation Sans", sans-serif; fill: #fff; }
.badge-text { font: 8px "DejaVu Sans", sans-serif; fill: #123; }
.badge-text.light { fill: #fff; }
.fn-text { font: 8px "DejaVu Sans Condensed", sans-serif; }

/* Workspace */
.workspace { flex: 1; min-height: 0; display: flex; border-top: 1px solid #aca899; }
.palette { flex: none; width: 61px; padding: 1px 0; border-right: 1px solid #aca899; }
.tool-grid { display: grid; grid-template-columns: 30px 30px; }
.tool-grid + .tool-grid { padding-top: 10px; background: linear-gradient(#aca899 50%, #fff 50%) 2px 4px / 56px 2px no-repeat; }
.tool-grid button { height: 30px; width: 30px; padding: 3px; position: relative; }
.tool-grid svg { width: 24px; height: 24px; }
.tool-grid .on { background: #c0c0c0; border: 1px solid #8c8c8c; width: 26px; height: 26px; margin: 2px; padding: 0; }
.tool-grid .right { grid-column: 2; }
.more::after { content: ""; position: absolute; right: 4px; bottom: 4px; border: 2px solid #000; border-top-color: transparent; border-left-color: transparent; }
.view {
  flex: 1;
  min-width: 0;
  display: grid;
  grid-template: minmax(0, 1fr) 16px / minmax(0, 1fr) 16px;
  position: relative;
}
.canvas { background: #fff; overflow: hidden; }
.drawing { width: 100%; height: 100%; }
.axis { font: 12px "Noto Sans", sans-serif; }
.scroll { display: flex; align-items: center; justify-content: space-between; background: #f0f0f0; }
.scroll svg { fill: none; stroke: #555; stroke-width: 2; }
.scroll i { background: #cdcdcd; }
.vertical { flex-direction: column; padding: 6px 0; }
.vertical i { width: 16px; height: 16px; }
.horizontal { padding: 0 6px 0 5px; }
.horizontal i { width: 17px; height: 16px; margin-left: 985px; }
.watermark { position: absolute; right: 66px; bottom: 10px; color: #aeaeae; font-family: "Noto Sans", "Noto Sans CJK SC", sans-serif; font-weight: 300; font-size: 15px; line-height: 20px; }
.watermark p:first-child { font-size: 21px; line-height: 27px; }

/* Status bar */
.status {
  flex: none;
  display: grid;
  grid-template-columns: 1fr 105px 105px 104px;
  gap: 1px;
  height: 24px;
  padding: 3px 5px 1px;
  border-top: 1px solid #000;
  box-shadow: inset 0 1px 0 #fff;
}
.status span { padding: 0 1px; border: 1px solid #808080; border-right-color: #fff; border-bottom-color: #fff; line-height: 18px; }
.taskbar { flex: none; height: 8px; background: #1b1518; }

/* Classic controls */
.field, .combo {
  width: 100%;
  height: 18px;
  padding: 0 2px;
  border: 1px solid;
  border-color: #9c9c9c #e3e3e3 #e3e3e3 #9c9c9c;
  box-shadow: inset 1px 1px 0 #696969, 1px 1px 0 #fff;
  background-color: #fff;
}
.combo {
  appearance: none;
  height: 20px;
  border-color: #8c8c8c #a0a0a0 #a0a0a0 #8c8c8c;
  padding: 0 18px 0 3px;
  background: #fff url("data:image/svg+xml,%3Csvg xmlns='http://www.w3.org/2000/svg' width='17' height='17'%3E%3Cpath fill='%23f0f0f0' d='M0 0h17v17H0z'/%3E%3Cpath d='M.5 17V.5H17' stroke='%23fff' fill='none'/%3E%3Cpath d='M0 16.500h16.500V0' stroke='%23696969' fill='none'/%3E%3Cpath d='M1 15.500h14.500V1' stroke='%23a0a0a0' fill='none'/%3E%3Cpath d='M5 7h7l-3.500 4z'/%3E%3C/svg%3E") right 0 top 1px no-repeat;
}
.combo:disabled {
  background-image: url("data:image/svg+xml,%3Csvg xmlns='http://www.w3.org/2000/svg' width='17' height='17'%3E%3Cpath fill='%23f0f0f0' d='M0 0h17v17H0z'/%3E%3Cpath d='M.5 17V.5H17' stroke='%23fff' fill='none'/%3E%3Cpath d='M0 16.500h16.500V0' stroke='%23696969' fill='none'/%3E%3Cpath d='M1 15.500h14.500V1' stroke='%23a0a0a0' fill='none'/%3E%3Cpath d='M5 7h7l-3.500 4z' fill='%23a0a0a0'/%3E%3C/svg%3E");
}
.field:disabled, .combo:disabled { color: #6d6d6d; opacity: 1; }
.field.grey, .combo.grey { background-color: #f0f0f0; }

/* Dialog */
.dialog {
  position: absolute;
  left: 328px;
  top: 110px;
  width: 712px;
  border: 1px solid #1c7cd0;
  background: #f0f0f0;
  box-shadow: 0 6px 18px rgba(0, 0, 0, .4);
  font: 11px/13px "Liberation Sans", Arial, sans-serif;
}
.dlg-title { display: flex; align-items: center; gap: 5px; height: 25px; padding: 0 9px 2px 3px; background: #fff; font: 12px/16px "Noto Sans", sans-serif; }
.dlg-title h2 { flex: 1; font-size: 12px; }
.dlg-body { padding: 6px 6px 9px 3px; }
.top-row { display: grid; grid-template-columns: 395px 1fr; gap: 7px; }
.panel, fieldset {
  border: 1px solid #a0a0a0;
  box-shadow: 1px 1px 0 #fff, inset 1px 1px 0 #fff;
}
.panel { height: 144px; min-width: 0; }
.settings { display: flex; justify-content: space-between; padding: 4px 6px 0 4px; }
.settings-left, .settings-right { display: grid; grid-auto-rows: 23px; align-items: start; }
.settings-left { grid-template-columns: 100px 103px; }
.settings-right { grid-template-columns: 67px 93px; }
.settings-right label { text-align: right; white-space: nowrap; padding-right: 2px; justify-self: end; }
.settings label { padding-top: 3px; }
.actions { display: grid; grid-template-columns: repeat(3, 87px); grid-auto-rows: 26px; gap: 3px 9px; padding: 14px 0 14px 10px; }
.btn {
  border: 1px solid;
  border-color: #fff #696969 #696969 #fff;
  box-shadow: inset -1px -1px 0 #a0a0a0, inset 1px 1px 0 #e3e3e3;
}
.btn.first, .btn.first + .btn { grid-column-start: 1; }
.btn:disabled, .off { color: #a0a0a0; text-shadow: 1px 1px 0 #fff; }
.btn.default { border-color: #696969; box-shadow: inset -1px -1px 0 #696969, inset 1px 1px 0 #fff, inset -2px -2px 0 #a0a0a0; outline: 1px dotted #000; outline-offset: -5px; }

.vertex-row { display: grid; grid-template-columns: 1fr 1fr; gap: 7px; padding-top: 4px; }
fieldset { min-width: 0; margin: 0; padding: 0; }
legend { margin-left: 1px; padding: 0 2px; background: #f0f0f0; }
.vertex { padding: 0 5px 7px; }
.props { display: grid; grid-template-columns: 112px 117px; grid-template-rows: 27px; grid-auto-rows: 18px; row-gap: 1px; padding: 17px 0 0 50px; align-items: start; }
.props label { white-space: nowrap; padding-top: 1px; }
.with-use { grid-template-columns: 112px 117px 54px; padding-left: 41px; }
.use { width: 28px; margin-top: -1px; justify-self: center; text-align: center; }
input[type="checkbox"] {
  appearance: none;
  width: 12px;
  height: 12px;
  margin-top: 3px;
  justify-self: center;
  border: 1px solid;
  border-color: #8c8c8c #e3e3e3 #e3e3e3 #8c8c8c;
  background: #fff url("data:image/svg+xml,%3Csvg xmlns='http://www.w3.org/2000/svg' width='10' height='10'%3E%3Cpath d='m2 4 2.500 2.500L8.500 2.500' fill='none' stroke='%23000' stroke-width='2'/%3E%3C/svg%3E") center no-repeat;
  box-shadow: inset 1px 1px 0 #696969, 1px 1px 0 #fff;
}
.axes { display: grid; grid-template-columns: repeat(3, 1fr); gap: 7px; padding-top: 18px; }
.axis-col > label { display: block; padding-left: 2px; }
.axis-col > .field { display: block; width: 93px; margin: 3px 0 5px 1px; }
.ref { padding: 0 4px 3px 5px; }
.ref legend { margin-left: 0; padding: 0 3px; }
.ref > label { display: block; padding-top: 6px; }
.line { display: flex; justify-content: space-between; align-items: center; }
.line:first-of-type { padding-top: 4px; }
.type { width: 56px; }
.value { display: block; width: 93px; margin: 3px 0 9px 1px; }
.rel { margin-bottom: 7px; }
.comp { width: 36px; }
.vert { width: 50px; }
.line + .line { padding-top: 6px; }
.close { width: 12px; height: 12px; }
```
FILE: grid.js
```javascript
// Snap grid: one pixel per node, spaced in scene units that are not whole pixels.
const STEP = 24.78;
let d = "";
for (let row = 0; row < 60; row++) {
  for (let col = 0; col < 120; col++) {
    const x = Math.floor(66.3 + col * STEP);
    const y = Math.floor(102.5 + row * STEP);
    if (y < 697) d += `M${x} ${y}h1v1h-1z`;
  }
}
document.getElementById("grid-dots").setAttribute("d", d);
```
